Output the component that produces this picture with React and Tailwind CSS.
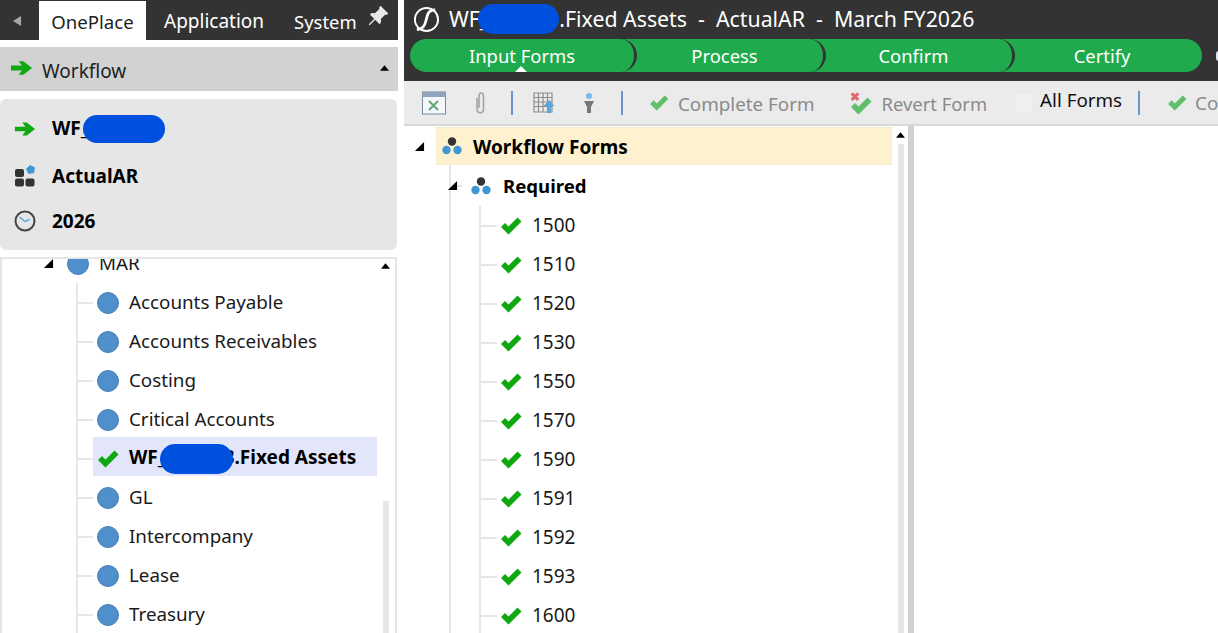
import { BsPinAngleFill } from "react-icons/bs";

const font = "font-['Noto_Sans','Open_Sans',sans-serif]";

const accounts = ["Accounts Payable", "Accounts Receivables", "Costing", "Critical Accounts"];
const accountsAfter = ["GL", "Intercompany", "Lease", "Treasury"];
const forms = ["1500", "1510", "1520", "1530", "1550", "1570", "1590", "1591", "1592", "1593", "1600"];

const Check = ({ className = "", color = "#0fa80f" }) => (
  <svg viewBox="0 0 22 18" className={className}>
    <path d="M1 10 L5 6 L8.5 9.5 L17.5 0.5 L21.5 4.5 L8.5 17.5 Z" fill={color} />
  </svg>
);

const GreenArrow = ({ className = "" }) => (
  <svg viewBox="0 0 24 16" className={className}>
    <path d="M1 5.5 H12.5 L9 1 H14 L23 8 L14 15 H9 L12.5 10.5 H1 Z" fill="#12a812" />
  </svg>
);

const Triad = () => (
  <svg viewBox="0 0 22 20" className="w-[22px] h-[20px] shrink-0">
    <circle cx="11" cy="5.5" r="4.2" fill="#333" />
    <circle cx="5.5" cy="14" r="4.2" fill="#3f97d3" />
    <circle cx="16.5" cy="14" r="4.2" fill="#3f97d3" />
  </svg>
);

const Caret = ({ className = "" }) => (
  <svg viewBox="0 0 12 12" className={className}>
    <path d="M11 1 V11 H1 Z" fill="#000" />
  </svg>
);

const UpArrow = ({ className = "" }) => (
  <svg viewBox="0 0 10 6" className={className}>
    <path d="M5 0 L10 6 H0 Z" fill="#000" />
  </svg>
);

const Dot = () => (
  <span className="w-[22px] h-[22px] rounded-full bg-[#4f8fcb] border border-[#4a80b5] shrink-0" />
);

const Blob = ({ className = "" }) => (
  <span className={`inline-block rounded-full bg-[#0050e0] align-middle ${className}`} />
);

const Sep = ({ className = "" }) => <span className={`w-[2px] h-[24px] bg-[#6d93c9] shrink-0 ${className}`} />;

const LeftRow = ({ children, icon, selected }) => (
  <div className="flex items-center h-[39px]">
    <span className="w-[15px] h-[2px] bg-[#e6e6e6] shrink-0" />
    <div className={`flex items-center h-full w-[284px] pl-[4px] ${selected ? "bg-[#e3e6fa] -mt-[4px] pt-[4px]" : ""}`}>
      <span className="w-[22px] flex justify-center shrink-0">{icon}</span>
      <span className={`ml-[10px] whitespace-nowrap ${selected ? "text-[19px] font-bold text-black" : "text-[18.8px] text-[#1a1a1a]"}`}>
        {children}
      </span>
    </div>
  </div>
);

const Segment = ({ label, width, inset, last }) => (
  <div
    className={`h-full flex items-center justify-center text-white text-[18.4px] pt-[1px] shrink-0 ${
      last ? "" : "rounded-r-[22px] border-r-[3px] border-[#333]"
    } ${width} ${inset}`}
  >
    {label}
  </div>
);

export default function App() {
  return (
    <div className={`${font} w-[1218px] h-[633px] bg-white flex overflow-hidden`}>
      {/* Left panel */}
      <aside className="w-[398px] h-full flex flex-col shrink-0">
        <div className="h-[40px] bg-[#333333] flex items-end shrink-0 relative">
          <span className="ml-[13px] mb-[14px] w-0 h-0 border-y-[5px] border-y-transparent border-r-[8px] border-r-[#a8a8a8]" />
          <div className="ml-[18px] w-[107px] h-[39px] bg-white flex items-center justify-center pt-[2px] text-[18.6px] text-[#222]">
            OnePlace
          </div>
          <div className="ml-[18px] h-[39px] flex items-center pt-[2px] text-[19px] text-white">Application</div>
          <div className="ml-[30px] h-[39px] flex items-center pt-[2px] text-[18.4px] text-white">System</div>
          <BsPinAngleFill className="absolute left-[367px] top-[5px] w-[22px] h-[22px] text-[#e8e8e8]" />
        </div>

        <div className="mt-[7px] h-[44px] bg-[#d2d2d2] flex items-center pl-[10px] pr-[9px] shrink-0">
          <GreenArrow className="w-[23px] h-[16px] -mt-[2px]" />
          <span className="ml-[9px] pt-[5px] text-[19px] text-[#222]">Workflow</span>
          <UpArrow className="ml-auto w-[9px] h-[6px] -mt-[3px]" />
        </div>

        <div className="mt-[8px] h-[151px] w-[397px] bg-[#e6e6e6] rounded-[6px] pl-[14px] flex flex-col justify-center gap-[1px] shrink-0 text-[19px] font-bold text-black">
          <div className="flex items-center h-[46px]">
            <GreenArrow className="w-[22px] h-[16px]" />
            <span className="ml-[16px] whitespace-nowrap">WF_</span>
            <Blob className="w-[82px] h-[28px] -ml-[6px]" />
          </div>
          <div className="flex items-center h-[45px] pt-[2px]">
            <svg viewBox="0 0 22 24" className="w-[22px] h-[24px]">
              <rect x="1" y="5" width="9" height="8" rx="2" fill="#333" />
              <rect x="1" y="14.5" width="9" height="8" rx="2" fill="#333" />
              <rect x="11.5" y="14.5" width="9" height="8" rx="2" fill="#333" />
              <path d="M16 1 L21 3.5 L20 9 L14.5 10 L12 5 Z" fill="#3f97d3" />
            </svg>
            <span className="ml-[16px]">ActualAR</span>
          </div>
          <div className="flex items-center h-[45px]">
            <svg viewBox="0 0 22 22" className="w-[22px] h-[22px]">
              <circle cx="11" cy="11" r="9.5" fill="none" stroke="#444" strokeWidth="2" />
              <path d="M5.5 7 L11 11.5 L15.5 9.5" fill="none" stroke="#5aa5dc" strokeWidth="1.5" />
            </svg>
            <span className="ml-[16px]">2026</span>
          </div>
        </div>

        <div className="mt-[7px] flex-1 min-h-0 w-[397px] border-t-2 border-x-2 border-[#e6e6e6] flex overflow-hidden">
          <div className="flex-1 min-w-0 pl-[41px]">
            <div className="flex items-center h-[39px] -mt-[15px]">
              <Caret className="w-[11px] h-[11px] mr-[13px]" />
              <Dot />
              <span className="ml-[10px] text-[18.8px] text-[#1a1a1a]">MAR</span>
            </div>
            <div className="ml-[33px] border-l-2 border-[#e6e6e6] pb-[40px]">
              {accounts.map((a) => (
                <LeftRow key={a} icon={<Dot />}>
                  {a}
                </LeftRow>
              ))}
              <LeftRow selected icon={<Check className="w-[22px] h-[18px]" />}>
                WF_
                <Blob className="w-[73px] h-[30px] -ml-[6px] relative z-10" />
                <span className="-ml-[9px]">3.Fixed Assets</span>
              </LeftRow>
              {accountsAfter.map((a) => (
                <LeftRow key={a} icon={<Dot />}>
                  {a}
                </LeftRow>
              ))}
            </div>
          </div>
          <div className="w-[13px] shrink-0 flex flex-col items-center mr-[3px]">
            <UpArrow className="mt-[4px] w-[9px] h-[6px]" />
            <div className="mt-[232px] w-[6px] flex-1 bg-[#e6e6e6]" />
          </div>
        </div>
      </aside>

      {/* Right panel */}
      <main className="ml-[6px] flex-1 min-w-0 h-full flex flex-col overflow-hidden">
        <div className="h-[81px] bg-[#333333] shrink-0 flex flex-col">
          <div className="h-[39px] flex items-center pl-[9px] pb-[2px] text-white text-[21.3px] whitespace-nowrap shrink-0">
            <svg viewBox="0 0 28 28" className="w-[27px] h-[27px] shrink-0 mt-[2px]">
              <circle cx="14" cy="14" r="12" fill="none" stroke="#fff" strokeWidth="2" />
              <path d="M23 4 C15 4 15 10 13.5 15 C12 21 10 24 4 24.5" fill="none" stroke="#fff" strokeWidth="2.8" />
            </svg>
            <span className="ml-[9px]">WF_</span>
            <Blob className="w-[81px] h-[30px] -ml-[11px]" />
            <span className="whitespace-pre">.Fixed Assets  -  ActualAR  -  March FY2026</span>
          </div>
          <div className="flex items-center h-[33px] shrink-0">
            <div className="ml-[6px] w-[792px] h-[33px] rounded-full bg-[#1fab4d] flex relative shrink-0">
              <Segment label="Input Forms" width="w-[227px]" inset="" />
              <Segment label="Process" width="w-[189px]" inset="pr-[11px]" />
              <Segment label="Confirm" width="w-[189px]" inset="pr-[11px]" />
              <Segment label="Certify" width="w-[187px]" inset="pr-[13px]" last />
              <span className="absolute left-[105px] bottom-0 w-0 h-0 border-x-[6px] border-x-transparent border-b-[6px] border-b-white" />
            </div>
            <span className="ml-[14px] w-[6px] h-[10px] rounded-full bg-[#dfe8f0] shrink-0" />
          </div>
        </div>

        <div className="h-[45px] shrink-0 bg-[#ebebeb] border-b-[2px] border-[#d8d8d8] flex items-center whitespace-nowrap text-[18.8px] text-[#8a8a8a]">
          <svg viewBox="0 0 24 24" className="ml-[18px] w-[24px] h-[24px] shrink-0">
            <rect x="0.5" y="1" width="23" height="22" fill="#f4f7f9" stroke="#7b8a99" />
            <rect x="0.5" y="1" width="23" height="5" fill="#8fa3bd" />
            <path d="M7 10 L16 19 M16 10 L7 19" stroke="#65a877" strokeWidth="2" />
          </svg>
          <svg viewBox="0 0 12 24" className="ml-[28px] w-[12px] h-[24px] shrink-0">
            <path
              d="M3 7 V18 C3 23 9.5 23 9.5 18 V5 C9.5 1 5 1 5 5 V17"
              fill="none"
              stroke="#a3a3a3"
              strokeWidth="1.6"
            />
          </svg>
          <Sep className="ml-[25px]" />
          <svg viewBox="0 0 22 22" className="ml-[20px] w-[22px] h-[22px] shrink-0">
            <path d="M1 1 H19 V20 H1 Z M5.5 1 V20 M10 1 V20 M14.5 1 V20 M1 5.5 H19 M1 10 H19 M1 14.5 H19" fill="none" stroke="#8d8d8d" strokeWidth="1.2" />
            <path d="M16 8 L21.5 14 H18 V21 H14 V14 H10.5 Z" fill="#5aa5dc" />
          </svg>
          <svg viewBox="0 0 12 22" className="ml-[28px] w-[12px] h-[22px] shrink-0">
            <circle cx="6" cy="4" r="3" fill="#7db9e3" />
            <path d="M1 9 H11 L8 15 V21 H4 V15 Z" fill="#777" />
          </svg>
          <Sep className="ml-[26px]" />
          <Check className="ml-[26px] w-[20px] h-[16px] shrink-0" color="#5fbf6a" />
          <span className="ml-[9px] pt-[3px]">Complete Form</span>
          <span className="relative ml-[36px] w-[23px] h-[24px] shrink-0">
            <Check className="absolute left-0 bottom-0 w-[22px] h-[18px]" color="#5fbf6a" />
            <span className="absolute left-0 top-0 text-[12px] leading-[12px] font-bold text-[#e06a6a]">✖</span>
          </span>
          <span className="ml-[8px] pt-[2px] text-[18.4px]">Revert Form</span>
          <span className="ml-[29px] w-[16px] h-[18px] bg-[#f0f0f0] shrink-0" />
          <span className="ml-[8px] text-[#111] -mt-[5px]">All Forms</span>
          <Sep className="ml-[16px]" />
          <Check className="ml-[27px] w-[20px] h-[16px] shrink-0" color="#5fbf6a" />
          <span className="ml-[8px] pt-[2px]">Complete</span>
        </div>

        <div className="flex-1 min-h-0 flex">
          <div className="w-[488px] shrink-0 pl-[10px] pt-[1px] flex flex-col overflow-hidden">
            <div className="flex items-center h-[38px] shrink-0">
              <Caret className="w-[11px] h-[11px] mr-[11px]" />
              <div className="flex-1 h-full bg-[#fdf1cf] border border-[#f6ecd0] flex items-center pl-[4px] text-[19px] font-bold text-black">
                <Triad />
                <span className="ml-[10px] pt-[2px]">Workflow Forms</span>
              </div>
            </div>
            <div className="ml-[35px] flex flex-col border-l-2 border-[#e6e6e6]">
              <div className="flex items-center h-[41px] shrink-0">
                <span className="w-[11px] h-[2px] bg-[#e6e6e6]" />
                <Caret className="w-[11px] h-[11px] -ml-[15px] mr-[12px]" />
                <Triad />
                <span className="ml-[11px] text-[18.6px] font-bold text-black">Required</span>
              </div>
              <div className="ml-[28px] border-l-2 border-[#e6e6e6]">
                {forms.map((f) => (
                  <div key={f} className="flex items-center h-[39px]">
                    <span className="w-[16px] h-[2px] bg-[#e6e6e6]" />
                    <Check className="ml-[3px] w-[22px] h-[18px]" />
                    <span className="ml-[10px] text-[19px] text-[#1a1a1a]">{f}</span>
                  </div>
                ))}
              </div>
            </div>
          </div>
          <div className="ml-[2px] w-[13px] shrink-0 flex flex-col items-center pt-[6px]">
            <UpArrow className="w-[9px] h-[6px]" />
            <div className="mt-[6px] w-[6px] flex-1 bg-[#e6e6e6]" />
          </div>
          <div className="ml-[1px] w-[6px] shrink-0 bg-[#d0d0d0]" />
          <div className="flex-1 bg-white" />
        </div>
      </main>
    </div>
  );
}
